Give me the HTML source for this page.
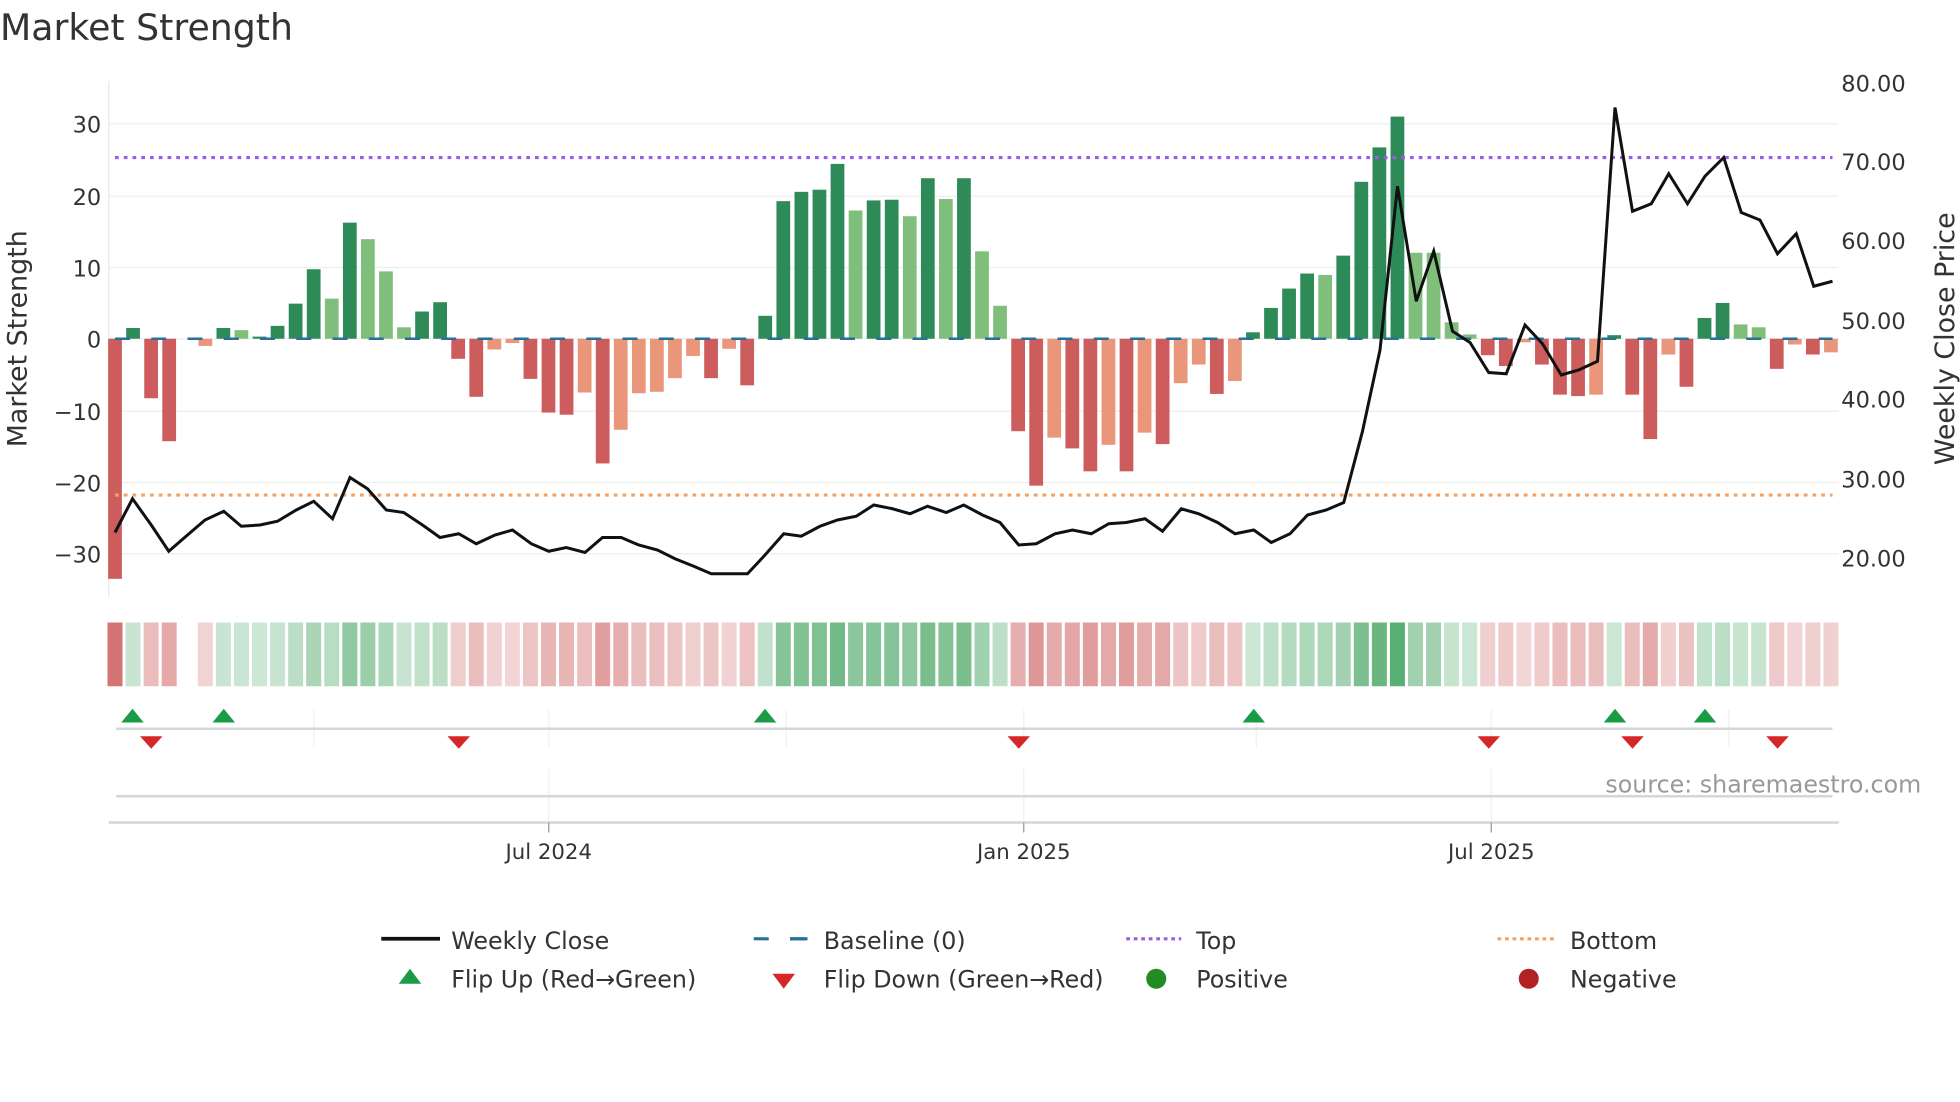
<!DOCTYPE html>
<html><head><meta charset="utf-8"><style>
html,body{margin:0;padding:0;background:#fff;width:1960px;height:1102px;overflow:hidden}
svg{display:block}
text{font-family:"DejaVu Sans","Liberation Sans",sans-serif;fill:#333}
</style></head><body>
<svg id="s" width="1960" height="1102" viewBox="0 0 1568 881.6" xmlns="http://www.w3.org/2000/svg">
<text x="0" y="32" font-size="29" fill="#333">Market Strength</text>
<g id="grid" stroke="#eceef0" stroke-width="1"></g>
<line x1="87" y1="65" x2="87" y2="478" stroke="#e8e8e8"/>
<g font-size="18" text-anchor="end">
<text x="81" y="106">30</text><text x="81" y="164">20</text><text x="81" y="221">10</text><text x="81" y="278">0</text>
<text x="81" y="336">−10</text><text x="81" y="393">−20</text><text x="81" y="450">−30</text>
</g>
<g font-size="18">
<text x="1473" y="73">80.00</text><text x="1473" y="136">70.00</text><text x="1473" y="199">60.00</text><text x="1473" y="263">50.00</text>
<text x="1473" y="326">40.00</text><text x="1473" y="390">30.00</text><text x="1473" y="453">20.00</text>
</g>
<text transform="translate(21,271) rotate(-90)" font-size="21.5" text-anchor="middle">Market Strength</text>
<text transform="translate(1563,271) rotate(-90)" font-size="21.5" text-anchor="middle">Weekly Close Price</text>
<g id="bars"></g>
<line x1="92" y1="271" x2="1466" y2="271" stroke="#2a6f97" stroke-width="2" stroke-dasharray="12,17"/>
<line x1="92" y1="126" x2="1466" y2="126" stroke="#9b5de5" stroke-width="2.5" stroke-dasharray="3,4"/>
<line x1="92" y1="396" x2="1466" y2="396" stroke="#f4a261" stroke-width="2.5" stroke-dasharray="3,4"/>
<polyline id="price" fill="none" stroke="#111" stroke-width="2.4" stroke-linejoin="miter"></polyline>
<g id="strip"></g>
<g stroke="#eef0f2" stroke-width="1">
<line x1="251" y1="568" x2="251" y2="598"/><line x1="439" y1="568" x2="439" y2="598"/><line x1="629" y1="568" x2="629" y2="598"/>
<line x1="819" y1="568" x2="819" y2="598"/><line x1="1005" y1="568" x2="1005" y2="598"/><line x1="1193" y1="568" x2="1193" y2="598"/><line x1="1383" y1="568" x2="1383" y2="598"/>
<line x1="439" y1="615" x2="439" y2="658"/><line x1="819" y1="615" x2="819" y2="658"/><line x1="1193" y1="615" x2="1193" y2="658"/>
</g>
<line x1="93" y1="583" x2="1466" y2="583" stroke="#d4d7da" stroke-width="2"/>
<g id="flips"></g>
<line x1="93" y1="637" x2="1466" y2="637" stroke="#d4d7da" stroke-width="2"/>
<text x="1537" y="634" font-size="19" text-anchor="end" fill="#999" style="fill:#999">source: sharemaestro.com</text>
<line x1="87" y1="658" x2="1471" y2="658" stroke="#d4d7da" stroke-width="2"/>
<g stroke="#999"><line x1="439" y1="658" x2="439" y2="666"/><line x1="819" y1="658" x2="819" y2="666"/><line x1="1193" y1="658" x2="1193" y2="666"/></g>
<g font-size="17" text-anchor="middle"><text x="439" y="687">Jul 2024</text><text x="819" y="687">Jan 2025</text><text x="1193" y="687">Jul 2025</text></g>
<g font-size="19">
<line x1="305" y1="751" x2="352" y2="751" stroke="#111" stroke-width="3"/><text x="361" y="759">Weekly Close</text>
<line x1="603" y1="751" x2="647" y2="751" stroke="#2a6f97" stroke-width="2.5" stroke-dasharray="12,17"/><line x1="632" y1="751" x2="646" y2="751" stroke="#2a6f97" stroke-width="2.5"/><text x="659" y="759">Baseline (0)</text>
<line x1="901" y1="751" x2="945" y2="751" stroke="#9b5de5" stroke-width="2.5" stroke-dasharray="3,3"/><text x="957" y="759">Top</text>
<line x1="1198" y1="751" x2="1243" y2="751" stroke="#f4a261" stroke-width="2.5" stroke-dasharray="3,3"/><text x="1256" y="759">Bottom</text>
<polygon points="328,775 337,787 319,787" fill="#1a9c47"/><text x="361" y="790">Flip Up (Red→Green)</text>
<polygon points="618,779 636,779 627,791" fill="#d62728"/><text x="659" y="790">Flip Down (Green→Red)</text>
<circle cx="925" cy="783" r="8" fill="#228b22"/><text x="957" y="790">Positive</text>
<circle cx="1223" cy="783" r="8" fill="#b22222"/><text x="1256" y="790">Negative</text>
</g>
</svg>
<script>
var NS="http://www.w3.org/2000/svg";
function el(p,t,a){var e=document.createElementNS(NS,t);for(var k in a)e.setAttribute(k,a[k]);p.appendChild(e);return e;}
var grid=document.getElementById('grid');
[99,157,214,271,329,386,443].forEach(function(y){el(grid,'line',{x1:87,y1:y,x2:1471,y2:y});});
var v=[[-33.5,'r'],[1.5,'g'],[-8.3,'r'],[-14.3,'r'],[0,'z'],[-1,'s'],[1.5,'g'],[1.2,'l'],[0.3,'g'],[1.8,'g'],[4.9,'g'],[9.7,'g'],[5.6,'l'],[16.2,'g'],[13.9,'l'],[9.4,'l'],[1.6,'l'],[3.8,'g'],[5.1,'g'],[-2.8,'r'],[-8.1,'r'],[-1.5,'s'],[-0.6,'s'],[-5.6,'r'],[-10.3,'r'],[-10.6,'r'],[-7.5,'s'],[-17.4,'r'],[-12.7,'s'],[-7.6,'s'],[-7.4,'s'],[-5.5,'s'],[-2.4,'s'],[-5.5,'r'],[-1.4,'s'],[-6.5,'r'],[3.2,'g'],[19.2,'g'],[20.5,'g'],[20.8,'g'],[24.4,'g'],[17.9,'l'],[19.3,'g'],[19.4,'g'],[17.1,'l'],[22.4,'g'],[19.5,'l'],[22.4,'g'],[12.2,'l'],[4.6,'l'],[-12.9,'r'],[-20.5,'r'],[-13.8,'s'],[-15.3,'r'],[-18.5,'r'],[-14.8,'s'],[-18.5,'r'],[-13.1,'s'],[-14.7,'r'],[-6.2,'s'],[-3.6,'s'],[-7.7,'r'],[-5.9,'s'],[0.9,'g'],[4.3,'g'],[7,'g'],[9.1,'g'],[8.9,'l'],[11.6,'g'],[21.9,'g'],[26.7,'g'],[31,'g'],[12,'l'],[12,'l'],[2.3,'l'],[0.6,'l'],[-2.3,'r'],[-3.8,'r'],[-0.5,'s'],[-3.6,'r'],[-7.8,'r'],[-8,'r'],[-7.8,'s'],[0.5,'g'],[-7.8,'r'],[-14,'r'],[-2.2,'s'],[-6.7,'r'],[2.9,'g'],[5,'g'],[2,'l'],[1.6,'l'],[-4.2,'r'],[-0.8,'s'],[-2.2,'r'],[-1.9,'s']];
var col={g:'#2e8b57',l:'#7fbf7b',r:'#cd5c5c',s:'#e9967a',z:'#fff'};
var bars=document.getElementById('bars'),strip=document.getElementById('strip');
function mix(c,t){return 'rgb('+c.map(function(x){return Math.round(255+(x-255)*t);}).join(',')+')';}
v.forEach(function(d,i){
 var x=92+14.45*i,val=d[0],h=Math.abs(val)*5.733;
 if(val!==0) el(bars,'rect',{x:x-5.5,y:val>0?271-h:271,width:11,height:h,fill:col[d[1]]});
 if(val!==0){var t=0.25+0.6*Math.min(1,Math.abs(val)/31);
  var base=val>0?[60,160,90]:[205,92,92];
  el(strip,'rect',{x:x-6,y:498,width:12,height:51,fill:mix(base,t)});}
});
var p=[[92,426],[106,399],[121,420],[135,441],[150,428],[164,416],[179,409],[193,421],[208,420],[222,417],[237,408],[251,401],[266,415],[280,382],[294,391],[309,408],[323,410],[338,420],[352,430],[367,427],[381,435],[396,428],[410,424],[425,435],[439,441],[453,438],[468,442],[482,430],[497,430],[511,436],[526,440],[540,447],[555,453],[569,459],[584,459],[598,459],[612,444],[627,427],[641,429],[656,421],[670,416],[685,413],[699,404],[714,407],[728,411],[742,405],[757,410],[771,404],[786,412],[800,418],[815,436],[829,435],[844,427],[858,424],[873,427],[887,419],[901,418],[916,415],[930,425],[945,407],[959,411],[974,418],[988,427],[1003,424],[1017,434],[1032,427],[1046,412],[1061,408],[1075,402],[1090,345],[1104,280],[1118,149],[1133,241],[1147,201],[1162,265],[1176,274],[1191,298],[1205,299],[1220,260],[1234,275],[1249,300],[1263,296],[1278,289],[1292,86],[1306,169],[1321,163],[1335,139],[1350,163],[1364,141],[1379,126],[1393,170],[1408,176],[1422,203],[1437,187],[1451,229],[1466,225]];
document.getElementById('price').setAttribute('points',p.map(function(a){return a.join(',');}).join(' '));
var fl=document.getElementById('flips');
[106,179,612,1003,1292,1364].forEach(function(x){el(fl,'polygon',{points:(x)+',567 '+(x+9)+',578 '+(x-9)+',578',fill:'#1a9c47'});});
[121,367,815,1191,1306,1422].forEach(function(x){el(fl,'polygon',{points:(x-9)+',589 '+(x+9)+',589 '+x+',599',fill:'#d62728'});});
</script>
</body></html>
